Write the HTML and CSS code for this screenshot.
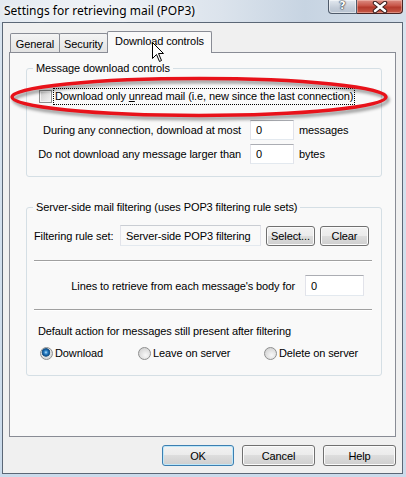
FILE: index.html
```html
<!DOCTYPE html>
<html lang="en">
<head>
  <meta charset="UTF-8" />
  <title>Settings for retrieving mail (POP3)</title>
  <link rel="stylesheet" href="styles.css">
</head>
<body>
  <div class="window">
    <div class="titlebar">
      <div class="title">Settings for retrieving mail (POP3)</div>
      <div class="caption">
        <div class="cap-help">?</div>
        <div class="cap-close">
          <svg width="16" height="12" viewBox="0 0 16 12">
            <path d="M3 2 L13 10 M13 2 L3 10" stroke="#3a2020" stroke-width="4.5" stroke-linecap="round"/>
            <path d="M3 2 L13 10 M13 2 L3 10" stroke="#ffffff" stroke-width="2.5" stroke-linecap="round"/>
          </svg>
        </div>
      </div>
    </div>

    <div class="client">
      <div class="tabs">
        <div class="tab tab-general">General</div>
        <div class="tab tab-security">Security</div>
        <div class="tab tab-active">Download controls</div>
      </div>

      <div class="panel">
        <div class="group group-download">
          <div class="group-title">Message download controls</div>
          <div class="check-row">
            <span class="checkbox"></span>
            <span class="focus">Download only <u>u</u>nread mail (i.e, new since the last connection)</span>
          </div>
          <div class="fields">
            <label class="field-label">During any connection, download at most</label>
            <input class="num" type="text" value="0" />
            <span class="unit">messages</span>
            <label class="field-label">Do not download any message larger than</label>
            <input class="num" type="text" value="0" />
            <span class="unit">bytes</span>
          </div>
        </div>

        <div class="group group-filter">
          <div class="group-title">Server-side mail filtering (uses POP3 filtering rule sets)</div>
          <div class="filter-row">
            <span class="filter-label">Filtering rule set:</span>
            <input class="ruleset" type="text" value="Server-side POP3 filtering" readonly />
            <button class="btn btn-small">Select...</button>
            <button class="btn btn-small">Clear</button>
          </div>
          <div class="sep"></div>
          <div class="lines-row">
            <span class="lines-label">Lines to retrieve from each message's body for</span>
            <input class="num num-wide" type="text" value="0" />
          </div>
          <div class="sep sep-second"></div>
          <div class="default-label">Default action for messages still present after filtering</div>
          <div class="radios">
            <span class="radio-item"><span class="radio radio-on"></span>Download</span>
            <span class="radio-item"><span class="radio"></span>Leave on server</span>
            <span class="radio-item"><span class="radio"></span>Delete on server</span>
          </div>
        </div>
      </div>

      <div class="buttons">
        <button class="btn btn-default">OK</button>
        <button class="btn">Cancel</button>
        <button class="btn">Help</button>
      </div>
    </div>

    <!-- annotation drawn over the dialog -->
    <svg class="highlight" width="406" height="56" viewBox="0 0 406 56">
      <defs>
        <filter id="soft" x="-5%" y="-50%" width="110%" height="200%">
          <feGaussianBlur stdDeviation="1.6" />
        </filter>
      </defs>
      <ellipse cx="201" cy="30" rx="187" ry="18.5" fill="none" stroke="#000" stroke-opacity="0.35" stroke-width="4" filter="url(#soft)" />
      <ellipse cx="199" cy="27" rx="187" ry="18.5" fill="none" stroke="#e8121a" stroke-width="3.5" />
    </svg>

    <svg class="cursor" width="13" height="21" viewBox="0 0 13 21">
      <path d="M0.5 0.5 L0.5 16.5 L4.5 12.5 L7.5 19.5 L9.5 18.5 L6.5 11.5 L11.5 11.5 Z" fill="#fff" stroke="#000" stroke-width="1" stroke-linejoin="miter" />
    </svg>
  </div>
</body>
</html>
```

FILE: styles.css
```css
body {
  margin: 0;
  width: 406px;
  height: 477px;
  overflow: hidden;
  background: #c8d9eb;
  font-family: Tahoma, "Liberation Sans", sans-serif;
  font-size: 11px;
  letter-spacing: -0.1px;
  color: #000;
}
.window {
  position: relative;
  height: 477px;
  background: linear-gradient(to bottom, #e6edf5 0, #d9e4ef 22px, #cbdbeb 100%);
}
.titlebar {
  height: 22px;
  display: flex;
  justify-content: space-between;
  align-items: flex-start;
  background: linear-gradient(to right, #e4eaf1 0%, #f0f3f7 25%, #dbe3ec 55%, #c7d4e2 75%, #d5dfea 100%);
}
.title {
  font-family: "Segoe UI", "Noto Sans", sans-serif;
  font-size: 12px;
  line-height: 16px;
  letter-spacing: 0;
  padding: 3px 0 0 4px;
  color: #000;
  text-shadow: 0 0 5px #fff, 0 0 9px #fff;
}
.caption {
  display: flex;
  margin-right: 3px;
}
.cap-help {
  width: 29px;
  height: 14px;
  box-sizing: border-box;
  border: 1px solid #4f5b6b;
  border-top: none;
  border-radius: 0 0 0 4px;
  background: linear-gradient(#e3e9f0, #c3ccd8 60%, #b6c2d0);
  box-shadow: inset 0 0 0 1px rgba(255, 255, 255, 0.5);
  text-align: center;
  font-family: "DejaVu Sans", sans-serif;
  font-weight: bold;
  font-size: 11px;
  line-height: 12px;
  color: #fff;
  text-shadow: 0 0 1px #2b3440, 0 0 1px #2b3440, 0 0 2px #2b3440;
}
.cap-close {
  width: 46px;
  height: 14px;
  box-sizing: border-box;
  border: 1px solid #4a2424;
  border-top: none;
  border-left: none;
  border-radius: 0 0 4px 0;
  background: linear-gradient(#dc8e84, #c75446 45%, #b33a2c 55%, #c85a48);
  box-shadow: inset 0 0 0 1px rgba(255, 220, 210, 0.4);
  display: flex;
  justify-content: center;
  align-items: center;
}
.client {
  margin-left: 2px;
  width: 401px;
  height: 452px;
  box-sizing: border-box;
  border: 1px solid #5b6776;
  background: #f0f0f0;
}
.tabs {
  display: flex;
  align-items: flex-end;
  height: 21px;
  padding: 8px 0 0 7px;
}
.tab {
  height: 19px;
  box-sizing: border-box;
  border: 1px solid #898c95;
  border-bottom: none;
  border-radius: 2px 2px 0 0;
  background: linear-gradient(#f4f4f4, #e3e3e3);
  text-align: center;
  line-height: 20px;
}
.tab-general {
  width: 50px;
}
.tab-security {
  width: 49px;
  margin-left: -1px;
}
.tab-active {
  position: relative;
  z-index: 1;
  width: 105px;
  height: 22px;
  margin: 0 0 -1px -1px;
  background: #f9f9f9;
  line-height: 19px;
}
.panel {
  margin: 0 6px;
  height: 385px;
  box-sizing: border-box;
  border: 1px solid #898c95;
  background: #f9f9f9;
  padding: 15px 13px 0 16px;
}
.group {
  border: 1px solid #d5dfe5;
  border-radius: 3px;
  box-sizing: border-box;
}
.group-download {
  height: 109px;
}
.group-filter {
  height: 169px;
  margin-top: 30px;
}
.group-title {
  width: fit-content;
  margin: -8px 0 0 6px;
  padding: 0 3px;
  line-height: 14px;
  background: #f9f9f9;
}
.check-row {
  display: flex;
  align-items: center;
  margin: 13px 0 0 12px;
}
.checkbox {
  width: 13px;
  height: 13px;
  box-sizing: border-box;
  border: 1px solid #8e8f8f;
  background: linear-gradient(135deg, #cbcbcb, #f6f6f6);
  box-shadow: inset 0 0 0 1px #f4f4f4;
  margin-right: 1px;
}
.focus {
  border: 1px dotted #000;
  padding: 1px;
  line-height: 13px;
}
.fields {
  display: grid;
  grid-template-columns: 223px 44px auto;
  row-gap: 4px;
  align-items: center;
  margin-top: 15px;
}
.field-label {
  text-align: right;
  padding-right: 9px;
}
.unit {
  padding-left: 5px;
}
.num, .ruleset {
  height: 20px;
  box-sizing: border-box;
  border: 1px solid;
  border-color: #abadb3 #e2e3ea #e3e9ef #e2e3ea;
  background: #fff;
  padding: 0 5px;
  margin: 0;
  font: inherit;
  letter-spacing: inherit;
  color: #000;
  outline: none;
}
.num {
  width: 44px;
}
.filter-row {
  display: flex;
  align-items: center;
  margin: 11px 0 0 7px;
}
.filter-label {
  width: 86px;
}
.ruleset {
  width: 141px;
  height: 21px;
  background: #f9f9f9;
  border-color: #c9cdd3 #e2e3ea #e3e9ef #e2e3ea;
}
.btn {
  height: 21px;
  box-sizing: border-box;
  border: 1px solid #707070;
  border-radius: 3px;
  background: linear-gradient(#f2f2f2 0, #ebebeb 50%, #dddddd 50%, #cfcfcf 100%);
  box-shadow: inset 0 0 0 1px #fbfbfb;
  font: inherit;
  letter-spacing: inherit;
  color: #000;
  padding: 0;
}
.btn-small {
  width: 49px;
  height: 20px;
  margin-left: 5px;
}
.sep {
  border-top: 1px solid #a0a0a0;
  border-bottom: 1px solid #fff;
  margin: 14px 9px 0 7px;
}
.lines-row {
  display: flex;
  justify-content: flex-end;
  align-items: center;
  margin: 13px 17px 0 0;
}
.lines-label {
  margin-right: 10px;
}
.num-wide {
  width: 59px;
  height: 21px;
}
.sep-second {
  margin-top: 13px;
}
.default-label {
  margin: 13px 0 0 11px;
  line-height: 14px;
}
.radios {
  display: grid;
  grid-template-columns: 98px 126px auto;
  margin: 8px 0 0 13px;
  line-height: 14px;
}
.radio-item {
  display: flex;
  align-items: center;
}
.radio {
  width: 13px;
  height: 13px;
  box-sizing: border-box;
  border: 1px solid #8e8f8f;
  border-radius: 50%;
  background: radial-gradient(circle at 60% 65%, #f8f8f8 0, #dcdcdc 60%, #c8c8c8 100%);
  margin-right: 2px;
}
.radio-on {
  background: radial-gradient(circle at 45% 40%, #bfe6ff 0, #3a8ed0 1.5px, #0f5596 3.2px, #2c5f8a 4px, #e0e0e0 4.6px, #d0d0d0 100%);
}
.buttons {
  display: flex;
  justify-content: flex-end;
  gap: 8px;
  padding: 8px 6px 0 0;
}
.buttons .btn {
  width: 73px;
}
.buttons .btn-default {
  width: 72px;
  border-color: #3c7fb1;
  box-shadow: inset 0 0 0 1px #bfe7f9;
}
.highlight {
  position: absolute;
  left: 0;
  top: 70px;
  pointer-events: none;
}
.cursor {
  position: absolute;
  left: 152px;
  top: 42px;
  z-index: 2;
}
```
